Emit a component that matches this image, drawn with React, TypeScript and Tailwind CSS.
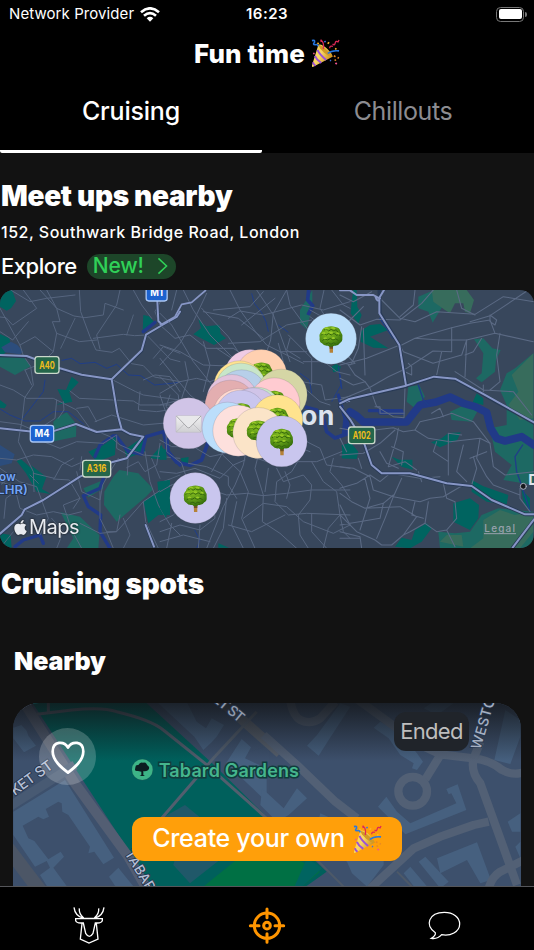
import React, { useState } from 'react'
import { FaApple } from 'react-icons/fa'

interface Pin {
  x: number
  y: number
  color: string
  icon: 'tree' | 'mail'
}

const pins: Pin[] = [
  { x: 513, y: 161, color: '#bbdefb', icon: 'tree' },
  { x: 106, y: 639, color: '#c9c6ee', icon: 'tree' },
  { x: 270, y: 270, color: '#efcbe5', icon: 'tree' },
  { x: 304, y: 270, color: '#ffd0b1', icon: 'tree' },
  { x: 238, y: 304, color: '#ffe391', icon: 'tree' },
  { x: 243, y: 311, color: '#c8e6c9', icon: 'tree' },
  { x: 245, y: 331, color: '#b7cfe9', icon: 'tree' },
  { x: 216, y: 345, color: '#e3c3dc', icon: 'tree' },
  { x: 365, y: 329, color: '#d5d6a5', icon: 'tree' },
  { x: 211, y: 362, color: '#e3aeb0', icon: 'tree' },
  { x: 343, y: 355, color: '#ffcbd1', icon: 'tree' },
  { x: 236, y: 388, color: '#ffd9d0', icon: 'tree' },
  { x: 290, y: 383, color: '#c8e6c9', icon: 'tree' },
  { x: 280, y: 385, color: '#d0c4e8', icon: 'tree' },
  { x: 243, y: 392, color: '#c9c6ee', icon: 'tree' },
  { x: 352, y: 406, color: '#ffe38e', icon: 'tree' },
  { x: 86, y: 415, color: '#d0c4e7', icon: 'mail' },
  { x: 203, y: 428, color: '#bbdefb', icon: 'tree' },
  { x: 235, y: 437, color: '#fde0dd', icon: 'tree' },
  { x: 295, y: 444, color: '#fbe4c8', icon: 'tree' },
  { x: 365, y: 469, color: '#c9c6ee', icon: 'tree' }
]

const Tree = () => (
  <g>
    <path d="M-5 16L-4 42H6L6 14Z" fill="#b58136" />
    <path d="M-5 16L-4 30H6L6 14Z" fill="#6f5122" />
    <path
      d="M-12 -35Q0 -40 13 -35Q26 -33 28 -23Q36 -13 34 -1Q35 9 27 13Q21 23 9 21Q0 28 -9 21Q-21 23 -27 14Q-36 9 -34 -3Q-37 -14 -28 -22Q-26 -33 -12 -35Z"
      fill="url(#leaves)"
    />
    <path
      d="M-21 -26Q-12 -33 -7 -23Q0 -32 8 -24Q18 -30 20 -19M-29 -10Q-22 -20 -14 -11Q-7 -20 1 -11Q10 -20 16 -10Q24 -17 29 -7M-26 6Q-19 -4 -10 4Q-2 -5 6 4Q14 -3 22 5M-16 16Q-6 8 0 17Q8 9 14 15"
      fill="none"
      stroke="#34650b"
      strokeWidth="3"
    />
    <path
      d="M-19 -29Q-12 -34 -8 -29M1 -31Q7 -34 12 -29M-27 -15Q-21 -20 -17 -15M-4 -16Q0 -20 5 -16M16 -16Q21 -18 24 -13M-22 0Q-17 -4 -13 0M3 0Q7 -4 11 0"
      fill="none"
      stroke="#97c926"
      strokeWidth="5"
    />
  </g>
)

const Mail = () => (
  <g>
    <rect x="-38" y="-23" width="76" height="50" rx="2" fill="url(#paper)" stroke="#b9b9bd" strokeWidth="1.5" />
    <path d="M-37 26L-10 -1M37 26L10 -1" stroke="#b4b4b8" strokeWidth="2" />
    <path d="M-37 -22L-4 12Q0 15 4 12L37 -22" fill="#e8e8ea" stroke="#9b9b9f" strokeWidth="2.5" />
  </g>
)

const PartyIcon = ({ className }: { className: string }) => (
  <svg viewBox="0 0 90 90" className={className} aria-label="party popper">
    <defs>
      <linearGradient id="cone" x1="0" y1="0" x2="1" y2="0.6">
        <stop offset="0" stopColor="#ffd34a" />
        <stop offset="0.5" stopColor="#f8d765" />
        <stop offset="1" stopColor="#c98a17" />
      </linearGradient>
    </defs>
    <path d="M23 18Q31 13 51 31Q68 48 67 55L7 86Q3 89 3 82Z" fill="url(#cone)" />
    <path d="M23 18Q42 20 67 55Q57 57 40 42Q24 27 23 18Z" fill="#d19a26" />
    <path d="M20 34Q27 49 47 65M12 52Q17 64 32 74M6 72Q8 79 14 83" fill="none" stroke="#9b51d8" strokeWidth="6" />
    <path d="M38 31Q42 15 33 5Q29 1 32 9M58 29Q58 19 68 23M67 15Q73 22 75 13Q77 4 84 9L87 3" fill="none" stroke="#dd2857" strokeWidth="4" />
    <path d="M3 5Q13 2 11 10Q4 17 13 18Q21 15 22 23M52 45Q65 34 87 37" fill="none" stroke="#2878df" strokeWidth="5" />
    <path d="M20 12l4 3M75 29l4 3M56 10l-4 5" stroke="#ffb329" strokeWidth="5" />
    <path d="M7 44l4 2M76 74l4 4" stroke="#ef5794" strokeWidth="5" />
    <path d="M71 52l5 3M75 63l1 5M83 57l3 3" stroke="#e98922" strokeWidth="5" />
    <path d="M42 6l3 4M59 66l3 2" stroke="#386fe4" strokeWidth="5" />
  </svg>
)

const Shield = ({ x, y, w, label, motorway }: { x: number; y: number; w: number; label: string; motorway?: boolean }) => (
  <g>
    <rect
      x={x - w / 2}
      y={y - 25}
      width={w}
      height="50"
      rx="8"
      fill={motorway ? '#1c62cf' : '#24664a'}
      stroke={motorway ? '#a9c6f4' : '#cbd8cb'}
      strokeWidth="4"
    />
    <text
      x={x}
      y={y + 11}
      textAnchor="middle"
      textLength={w - 25}
      lengthAdjust="spacingAndGlyphs"
      fontSize="32"
      fontWeight="700"
      fill={motorway ? '#ffffff' : '#efbc1b'}
      stroke="none"
    >
      {label}
    </text>
  </g>
)

const LondonMap = () => (
  <svg viewBox="0 0 534 258" className="block w-full h-[258px] rounded-[14px] bg-[#38475c] font-['Inter',sans-serif]">
    <defs>
      <radialGradient id="leaves" cx="0.4" cy="0.3" r="0.75">
        <stop offset="0" stopColor="#86bd20" />
        <stop offset="0.55" stopColor="#5d9816" />
        <stop offset="1" stopColor="#2f6709" />
      </radialGradient>
      <linearGradient id="paper" x1="0" y1="0" x2="0" y2="1">
        <stop offset="0" stopColor="#f2f2f3" />
        <stop offset="1" stopColor="#cfcfd2" />
      </linearGradient>
    </defs>

    {/* West */}
    <g transform="translate(0 -5) scale(0.33333)" fill="none" strokeLinejoin="round" strokeLinecap="round">
      <path fill="#006460" d="M0 20L35 12L48 48L33 70L20 77L0 65ZM0 147L28 160L35 190L0 215ZM0 345L20 360L14 370L0 368ZM215 275L236 292L208 322L217 350L168 360L190 350L172 312L198 315ZM50 528L63 523L100 555L92 540L139 576L126 612L152 627L110 620L78 565ZM348 452L345 510L290 530L265 500L310 480ZM430 650L475 620L472 590L510 585L510 690L475 690L445 715ZM430 90L447 94L466 115L428 140ZM370 480L380 490L430 455L435 500L380 520ZM450 520L485 480L500 525ZM0 745L32 750L35 790L0 790Z" />
      <path fill="#1d6963" d="M0 213L70 215L92 244L45 270L0 245ZM200 382L229 417L228 455L162 469L160 410L175 395ZM340 575L358 555L415 565L460 612L438 635L350 710L312 660L313 620ZM182 682L240 695L298 750L295 790L200 790L220 760ZM250 610L310 585L310 610L265 637Z" />
      <path fill="#2c4d7c" d="M4 187L33 170L52 180L70 200L60 208L15 202ZM0 480L44 508L35 535L0 543Z" />
      <path stroke="#203e89" strokeWidth="3" d="M186 226L215 220L240 236L285 232L320 250L350 238L385 270L422 272L464 300L540 292M135 285L130 320L68 400M0 372L30 390L74 408L120 408L160 380L205 380L252 418" />
      <path stroke="#213a88" strokeWidth="10" d="M310 580L300 610L250 632L265 665L302 690L300 740L330 790M340 452L300 480L285 515M348 452L385 500L425 507L438 455L490 440L505 505L540 540M430 140L465 112M45 785L70 765L120 750L130 775" />
      <g stroke="#586781" strokeWidth="2.8">
        <path d="M0 70L60 180L70 212L92 244L100 300L74 338L67 400L55 470L100 560L102 620M120 15L170 70L180 110L157 110L170 145L160 200L125 235L75 255M238 15L242 80L270 155L288 195L336 202L358 190L395 236L430 242L463 276L540 290" />
        <path d="M140 15L170 70L222 93L255 98L310 90L315 55L370 75M360 15L350 60L320 105L290 150L300 192M170 145L238 170L290 165M280 160L370 148L404 152L440 150L510 222L540 230M70 15L110 70L38 120L18 98L0 96M0 140L38 165L85 110M60 180L105 155L160 200" />
        <path d="M0 300L40 315L80 340L160 340L230 375L270 430L330 455L360 480L430 510L540 520M210 318L238 340L400 348L420 360L540 360M335 283L407 320L430 330L540 345M420 320L415 375L470 380L540 370M0 410L60 418L100 435L130 470L180 490L230 470L310 475" />
        <path d="M285 410L335 390L430 420L540 410M230 370L265 365L290 410M0 520L50 525L100 510L155 515L215 545L260 525M0 550L58 590L110 605L145 700L120 750M0 590L60 610L18 640L12 700M100 565L163 580L185 540L220 520M160 582L208 585L240 640L220 670" />
        <path d="M230 560L245 620L300 645L308 600L330 560L355 520M300 620L300 700L320 740L340 790M240 640L190 660L215 735L245 790M45 610L60 670L110 690L160 680L205 690L245 680M360 690L350 740L300 745L240 715M320 740L350 740L430 650L490 610L540 590M430 650L437 710L475 790M480 475L470 540L435 560L415 530L380 548M435 500L450 590L475 660L510 720L540 750" />
        <path d="M310 475L350 450L350 490L385 510L382 570M500 15L465 80L480 120M400 15L425 60L455 100M430 285L465 270L510 275L540 320M460 220L490 185L540 205M510 330L498 365L516 380M245 515L240 555M32 15L90 50L140 40L225 30M0 600L15 590M75 255L95 300M170 345L165 400L120 430M190 350L192 375L175 400" />
        <path d="M155 700L190 740L170 790M0 790L40 740M370 700L390 750L370 790M490 590L540 570M400 90L380 150M90 570L115 595M455 520L480 580M225 100L182 190" strokeWidth="2.5" />
      </g>
      <path
        stroke="#283a56"
        strokeWidth="9"
        d="M0 212L80 215L180 252L245 270L335 283L425 198L438 150L487 120M335 283L352 385L365 435L390 448L430 456L380 520L335 532L240 575L130 645L74 673L65 690L0 748M0 430L100 440L165 437L228 417L290 442L365 435M472 50L475 108L487 120L530 96L540 80M437 720L462 785"
      />
      <path
        stroke="#8796c5"
        strokeWidth="6"
        d="M0 210L80 213L180 250L245 269L335 283L425 196L438 149L487 120M335 283L352 385L365 433L390 447L430 455L380 520L335 532L240 575L130 645L74 673L65 690L0 746M0 430L100 440L165 437L228 417L290 441L365 433M472 50L475 108L487 120L530 96L540 80M437 720L462 785"
      />
    </g>

    {/* Centre */}
    <g transform="translate(160 -5) scale(0.33333)" fill="none" strokeLinejoin="round">
      <path fill="#006460" d="M100 148L123 130L115 103L138 124L178 120L182 146L198 160L162 180ZM0 590L26 585L28 645L18 700L0 670ZM0 485L18 495L20 520L0 525ZM62 520L86 516L84 535L66 535ZM514 245L528 237L543 245L537 259L520 262ZM545 480L570 475V520L548 520ZM175 775L207 788H175Z" />
      <path fill="#1d6963" d="M420 75L457 15V65L440 133L420 115Z" />
      <path stroke="#213a88" strokeWidth="11" d="M20 460L25 500L50 532L90 541L125 525L145 470M446 15L443 45L458 62L444 90M435 366L470 375L490 400L500 440L525 459L560 447L565 395L550 380" />
      <path stroke="#203e89" strokeWidth="3" d="M275 25L283 55L305 83L318 110L325 140M355 120L385 142M455 325L448 285L420 265M535 245L543 300L515 350M104 735L120 765L110 790" />
      <g stroke="#586781" strokeWidth="3" strokeLinecap="round">
        <path d="M70 15L100 75L150 150L235 235M210 15L240 75L290 145L320 180L390 215L430 235M0 85L35 120L100 230L180 330M0 180L60 200L130 240L250 245M125 70L205 155L300 300M290 15L340 90L390 230M380 15L340 85L332 165L310 230M380 15L390 60L430 115L510 220L570 240M140 25L100 110L60 175L0 240" />
        <path d="M0 325L60 290L110 280L150 290L230 260M0 220L40 270L90 330L150 380M0 275L55 330L60 405M0 360L60 345L160 350M75 230L85 280L65 340M160 75L270 65L310 20M205 100L240 78L310 90L425 60L490 75L570 50M245 120L345 40M205 175L300 170L380 120L455 105" />
        <path d="M450 75L495 100L570 125M492 15L480 70L520 130L510 220M430 230L510 230L570 200M385 150L455 220L455 300M360 200L440 200M390 160L380 195L420 220M0 120L45 160L90 150L140 190L220 190L265 220M130 170L150 240L130 320M170 190L215 220L340 215M515 15L550 60L570 70M515 140L570 160M450 95L490 125L535 110" />
        <path d="M0 465L35 485L100 485L150 515L220 500L290 520L350 540L410 530L470 530L570 490M18 440L20 500L65 535L85 595L140 610L200 630L260 625L310 632L380 625L455 615L570 615M0 560L50 565L105 550L180 580L220 540L255 525M180 445L188 510L240 560L265 620L245 700L285 790M265 465L250 540L225 600L190 665L140 790M300 490L285 550L310 630L307 710L360 745L410 790" />
        <path d="M85 535L140 545L205 575L205 600L230 640M425 510L395 560L350 590L345 650L385 690L440 685L570 690M350 550L370 590L430 570L455 600L450 645L415 690L420 750L445 790M250 700L310 655L380 665L430 710L520 745L570 720M205 720L275 740L375 690M160 640L165 700L120 735L60 720L0 740M35 715L20 790M120 720L115 790M200 640L190 730L160 790" />
        <path d="M455 530L490 590L530 620L540 690L505 730L490 790M520 520L510 560L545 600L570 640M440 470L480 490L500 540L570 550M455 685L455 740L500 790M325 550L315 620M230 650L215 720L250 790M0 710L40 690L70 660M0 620L35 600M190 500L155 560M375 560L390 600L380 640M540 690L550 740L570 760" />
        <path d="M440 315L480 350L510 360M425 290L485 300L495 345L570 335M410 485L450 500M465 160L490 170L480 220L530 260L570 270M0 330L20 390M50 15L35 75M355 175L370 230M130 80L235 100L310 160M0 770L70 750L150 770" />
      </g>
      <path stroke="#8796c5" strokeWidth="5" d="M138 15L95 52L65 58L45 95L0 121M570 347L546 354L548 378L566 393" />
    </g>

    {/* East */}
    <g transform="translate(340 -5) scale(0.33333)" fill="none" strokeLinejoin="round" strokeLinecap="round">
      <path fill="#006460" d="M40 15H50L52 65L65 90L55 116L32 85L35 50ZM62 138L90 120L120 117L145 135L90 155L145 190L100 188L62 170ZM273 472L305 460L325 444L362 442L352 465L300 487ZM155 515L178 524H217L218 554L185 545ZM8 485L30 470L55 500L50 522L5 520ZM410 325L430 340V360L398 352ZM395 585L430 604L505 630L500 658L440 650L395 620ZM340 655L390 640L417 660L415 700L390 735L340 710ZM165 785L185 758L215 765L225 735L260 715L275 730L245 770L210 790ZM545 615L570 640V680L550 650Z" />
      <path fill="#1d6963" d="M235 35L270 20L300 15L310 60L278 113L265 80L235 70ZM402 163L430 160L457 190L482 195L468 225L465 260L425 292L408 280L425 265L430 205ZM480 315L500 265L525 250L580 205V600L490 585L515 540L465 500L450 430L500 420L500 360ZM330 380L395 350L420 365L395 410L335 405ZM205 305L238 300L255 335L225 370L200 350ZM425 690L475 670L580 680V790H300L295 740L345 745L390 740Z" />
      <path fill="#376c5c" d="M275 15H380L402 45L390 85L375 80L370 55L345 55L330 85L315 75L280 50ZM515 270L545 240L580 205V400L540 405L505 360L535 320ZM430 705L480 675L525 690L580 680V740L540 790H390L430 760ZM320 750L365 750L370 785L300 770Z" />
      <path stroke="#213a88" strokeWidth="23" d="M30 380L50 392L70 411H200L220 385L240 360L285 352L330 336L370 355L405 365L440 382L452 430L470 460L495 468L545 455L582 480" />
      <path stroke="#213a88" strokeWidth="10" d="M-5 330L15 400L10 450L-5 457M88 377H185M120 384H190" />
      <path stroke="#203e89" strokeWidth="4" d="M548 480L525 515L530 560L548 610L570 680M235 300L250 345L265 360M0 270L5 310M120 100L160 160" />
      <g stroke="#5b6a84" strokeWidth="3.2">
        <path d="M0 75L60 120L110 103L180 105L245 55L280 15M125 45L180 100L225 110L290 80L405 88L490 35L582 50M390 110L450 92L565 15M185 180L225 160L335 128L390 115L450 105L465 145L380 165L300 165L225 160M465 145L580 170M450 90L470 105L465 120L450 110Z" />
        <path d="M182 185L190 200L279 235L365 210L380 165L375 275M305 200L290 270M335 128V200L279 198L200 250L145 275L85 310L0 345M0 240L80 220L180 180M25 240L45 270L75 290L90 310L110 365L160 395L192 398L195 305M195 260L215 270V245L205 235M0 30L40 50L95 20M0 135L30 105L70 65M65 125L55 190L35 235" />
        <path d="M225 15L220 60L180 95M350 15L365 70L405 90M480 145L470 210L480 290L450 315M345 260L430 315L520 320L575 390M430 300V320M425 160L400 200L375 210M70 130L75 270M0 190L45 235L25 240M0 430L60 440L160 428L190 440L225 435L240 410L300 397L335 385L400 410L450 475L460 545L495 570L582 560" />
        <path d="M225 435L265 460L330 470L420 460L450 475M175 430L170 460L145 545L195 530L230 555M155 485L190 500L185 540M290 470L280 500L325 530L325 445L365 450M325 530V570M275 385L300 370L310 395M105 365H120V385H192M120 500L140 535L175 550M0 510L70 505L120 475L165 435M0 545L40 550L90 575L100 615L160 635L240 650L270 640L310 635L370 600" />
        <path d="M0 610L50 595L90 570L120 590L150 565L240 580L300 575M75 580L90 640L60 735M0 625L35 650L75 670L130 655L160 630M0 690L50 740L105 765L125 780H155L190 750L210 740L255 715L290 740L320 735L345 785M185 580L160 635L135 700L110 760M265 650L255 715M225 650L215 690L250 700M75 670L180 665L230 695L190 750M310 595L320 640L345 650L350 700L320 735" />
        <path d="M400 515L410 550L395 600M390 520L440 500M420 460L410 520L440 575L460 600L540 630M540 610V640L570 680M0 740L60 755L65 790M0 760H60M20 500L0 460M55 520L65 550M235 560L245 590M0 660L30 720M130 655L120 700L0 720M370 480L350 560L380 590M0 280L40 300L75 290M0 170L50 180" />
      </g>
      <path stroke="#283a56" strokeWidth="11" d="M118 15L120 85L178 180L199 302L282 276L345 282L432 330L582 414M199 304L28 342L0 357M0 365L30 405L70 470L95 540L125 565H210L320 595L395 603L455 645L555 688H582M582 705L518 788" />
      <path stroke="#8796c5" strokeWidth="6" d="M0 16H30L50 30H100L118 40M132 15L118 38L118 85L178 180L198 302L282 275L345 281L432 328L582 412M198 302L28 342L0 355M0 365L30 403L70 468L95 540L125 565H210L320 595L395 603L455 645L555 688H582M582 703L518 788M106 34Q112 55 120 40" />
      <circle cx="550" cy="604" r="9" fill="#17191d" stroke="#a9b1bf" strokeWidth="3" />
      <text x="565" y="599" fontSize="45" fontWeight="700" fill="#dfe4ec">D</text>
      <Shield x={65} y={451} w={79} label="A102" />
      <text x="433" y="740" fontSize="30" fontWeight="500" textLength="92" fill="#99a2ae" stroke="none">Legal</text>
      <path d="M433 746H527" stroke="#99a2ae" strokeWidth="3" />
    </g>

    <g transform="translate(0 -5) scale(0.33333)">
      <Shield x={470} y={23} w={63} label="M1" motorway />
      <Shield x={141} y={240} w={72} label="A40" />
      <Shield x={126} y={446} w={70} label="M4" motorway />
      <Shield x={290} y={551} w={84} label="A316" />
      <g fontSize="36" fontWeight="600" fill="#73a4f6" stroke="#20304b" strokeWidth="5" paintOrder="stroke">
        <text x="-3" y="587" textLength="50" lengthAdjust="spacingAndGlyphs">ow</text>
        <text x="-8" y="627" textLength="92" lengthAdjust="spacingAndGlyphs">LHR)</text>
      </g>
    </g>

    <g transform="translate(160 -5) scale(0.33333)">
      <text x="423" y="419" fontSize="80" fontWeight="700" textLength="100" fill="#dce4ef" stroke="#38475c" strokeWidth="4" paintOrder="stroke">on</text>
      {pins.map((pin, index) => (
        <g key={index} transform={`translate(${pin.x} ${pin.y})`}>
          <circle r="76.5" fill={pin.color} stroke="#595763" strokeOpacity="0.35" strokeWidth="1.5" />
          {pin.icon === 'tree' ? <Tree /> : <Mail />}
        </g>
      ))}
    </g>
  </svg>
)

const GardenMap = () => (
  <svg viewBox="0 0 508 184" className="block w-full h-[184px] font-['Inter',sans-serif]">
    <defs>
      <linearGradient id="shade" x1="0" y1="0" x2="0" y2="1">
        <stop offset="0" stopColor="#111316" stopOpacity="0.8" />
        <stop offset="1" stopColor="#111316" stopOpacity="0" />
      </linearGradient>
    </defs>
    <rect width="508" height="184" fill="#3d506c" />
    <g transform="translate(-13 -8) scale(0.33333)" fill="none">
      <path fill="#00605c" d="M95 20H435L640 208L980 530L910 580H460Z" />
      <path fill="#007044" d="M610 575L705 498L800 440L960 530L900 580Z" />
      <path fill="#3d506c" d="M640 208L810 150V375Z" />
      <path fill="#205869" d="M485 370L555 330L640 400L690 470L570 565L520 510L535 455Z" />
      <g fill="#46607f">
        <path d="M40 98L64 90L80 107L85 122L108 152L72 172L40 130Z" />
        <path d="M40 350L195 255L342 488L310 508L283 470L265 475L270 455L205 360L187 350L185 325L175 320L137 342L147 365L130 373L115 365L68 392L85 430L103 438L145 493L182 470L192 485L160 518L205 580H145L120 540L150 518L140 498L105 515L40 420Z" />
        <path d="M355 518L405 580H350L327 545Z" />
        <path d="M470 20L583 125L610 165L635 142L650 125L672 90L635 70L618 100L590 80L560 20Z" />
        <path d="M725 132L753 157L735 190L800 220V320L678 205Z" />
      </g>
      <g stroke="#4c5666">
        <path d="M20 455L130 600" strokeWidth="42" />
        <path d="M70 20L105 75L225 265L385 485L445 590" stroke="#535e73" strokeWidth="30" />
        <path d="M20 340L225 210" stroke="#485a73" strokeWidth="28" />
        <path d="M660 15L840 175" stroke="#555e6b" strokeWidth="30" />
      </g>
      <path stroke="#525e6e" strokeWidth="9" d="M110 58L215 45Q310 35 350 50Q455 75 490 105L615 205L800 370M485 370L640 190L770 50M145 20V50" />
    </g>
    <g transform="translate(254 -8) scale(0.33333)" fill="none">
      <g fill="#46607f">
        <path d="M220 25L250 35L185 135L155 182L120 152L150 120ZM340 80L320 98L365 130L400 180L440 205L435 220L450 225L468 200L450 175L390 105ZM500 20L470 40L510 60L560 25ZM715 45L760 75V125L730 207L682 195Z" />
        <path d="M358 305L333 335L415 418L598 345L572 268L538 282L545 298L553 295L568 325L430 385L390 350ZM-15 280L50 340L60 325L90 280L120 310L65 360L30 380L-20 330ZM160 355L215 380L140 430ZM760 355L722 380L735 410H760Z" />
        <path d="M510 490L630 442L672 555L640 565L600 495L520 535ZM475 485L545 560L520 580L455 500ZM410 535L430 515L485 580H445ZM760 440V490L745 455ZM225 490H350L350 510L300 575L255 535L240 500Z" />
      </g>
      <g stroke="#526075" strokeWidth="25" strokeLinejoin="round">
        <path d="M-10 120L90 210L205 320L270 370M70 20Q80 65 100 75Q130 90 160 70L205 20M260 5L370 85L460 150L520 178L620 190Q670 195 705 225Q735 242 770 232M520 180L475 253M620 190Q610 230 640 265L750 570M665 380L620 390L520 425L440 460L310 580M770 495L700 530Q675 545 665 580" />
        <circle cx="437" cy="289" r="43" />
        <path d="M620 190L640 140" />
      </g>
      <path fill="#006460" d="M120 490L165 520L100 580H80Z" />
      <path stroke="#4d5968" strokeWidth="6" d="M145 490L235 580M390 530L440 580" />
    </g>
    <rect width="508" height="58" fill="url(#shade)" />
    <g transform="translate(-13 -8) scale(0.33333)" stroke="#26354c" strokeWidth="5" paintOrder="stroke">
      <text transform="translate(44 303) rotate(-36)" fontSize="43" fontWeight="500" textLength="146" fill="#b4bfd5">KET ST</text>
      <text transform="translate(373 475) rotate(59)" fontSize="41" fontWeight="500" textLength="166" fill="#b4bfd5">TABARD</text>
      <text transform="translate(616 -1) rotate(40)" fontSize="43" fontWeight="500" textLength="134" fill="#929baa">KET ST</text>
      <circle cx="427" cy="224" r="31" fill="#3db487" stroke="#1d5c58" strokeWidth="3" />
      <path d="M424 230L414 228Q402 230 406 219Q405 209 415 210Q420 200 429 203Q439 201 442 211Q452 217 444 226Q436 230 430 228V240L435 243H419L424 240Z" fill="#0c1c20" stroke="none" />
      <text x="476" y="247" fontSize="54" fontWeight="600" textLength="421" fill="#45b58d" stroke="#103c3c" strokeWidth="9">Tabard Gardens</text>
      <text transform="translate(1441 166) rotate(-74)" fontSize="42" fontWeight="500" letterSpacing="2" fill="#a4afc1">WESTON</text>
    </g>
  </svg>
)

const StatusBar = () => (
  <div className="relative flex h-7 items-center justify-between pl-[9px] pr-[7px]">
    <div className="flex items-center gap-[6px]">
      <span className="text-[15px] tracking-[0.08px]">Network Provider</span>
      <svg viewBox="0 0 60 44" className="h-[15px] w-5" fill="none" stroke="white" strokeWidth="8">
        <path d="M3 15Q30 -8 57 15M12 26Q30 10 48 26" />
        <path d="M20 33Q30 25 40 33L30 44Z" fill="white" stroke="none" />
      </svg>
    </div>
    <span className="absolute left-1/2 -translate-x-1/2 text-[15px] font-semibold tracking-[0.5px]">16:23</span>
    <div className="flex items-center gap-px">
      <div className="h-[15px] w-7 rounded-[4.5px] border border-[#777] p-[1.5px]">
        <div className="h-full w-full rounded-[2px] bg-white" />
      </div>
      <div className="h-[5px] w-[2px] rounded-r bg-[#777]" />
    </div>
  </div>
)

const tabs = ['Cruising', 'Chillouts']

const App = () => {
  const [activeTab, setActiveTab] = useState('Cruising')
  const [liked, setLiked] = useState(false)

  return (
    <div className="relative flex h-[950px] w-[534px] flex-col overflow-hidden bg-[#121212] font-['Inter',sans-serif] text-white">
      <header className="h-[153px] shrink-0 bg-black">
        <StatusBar />
        <h1 className="flex h-[50px] items-center justify-center gap-[6px] text-[26px] font-extrabold tracking-[0.1px]">
          Fun time <PartyIcon className="h-[29px] w-[29px]" />
        </h1>
        <nav className="flex h-[75px]">
          {tabs.map((tab) => (
            <button
              key={tab}
              onClick={() => setActiveTab(tab)}
              className={
                activeTab === tab
                  ? 'w-[262px] rounded-[2px] border-b-[3px] border-white pb-1 text-[25px] font-medium tracking-[-0.2px]'
                  : 'flex-1 pb-[7px] pl-[10px] text-[25px] tracking-[-0.4px] text-[#8c8c91]'
              }
            >
              {tab}
            </button>
          ))}
        </nav>
      </header>

      <main className="min-h-0 flex-1 overflow-hidden">
        <h2 className="mt-6 pl-px text-[28px] font-black leading-[38px] tracking-[-0.3px]">Meet ups nearby</h2>
        <p className="mt-[7px] pl-px text-base font-medium leading-5 tracking-[0.5px]">152, Southwark Bridge Road, London</p>
        <div className="mt-[11px] flex h-[26px] items-center gap-[10px] pl-px">
          <span className="text-[22px] font-medium tracking-[-0.45px]">Explore</span>
          <button className="flex h-[25px] w-[89px] items-center justify-between rounded-full bg-[#1d4629] pl-[6px] pr-[8px] text-[21px] font-medium tracking-[-0.2px] text-[#30d158]">
            New!
            <svg viewBox="0 0 12 20" className="h-[18px] w-[11px]" fill="none" stroke="currentColor" strokeWidth="1.7">
              <path d="M1.5 1.5L10.5 10L1.5 18.5" />
            </svg>
          </button>
        </div>
        <div className="relative mt-[11px]">
          <LondonMap />
          <div className="absolute bottom-[6px] left-[13px] flex items-center gap-px text-[20px] tracking-[-0.5px] text-[#e7eaf0] drop-shadow-[0_0_1px_#111]">
            <FaApple className="h-[17px] w-[15px]" />
            Maps
          </div>
        </div>

        <h2 className="mt-[17px] pl-px text-[28px] font-black leading-[38px] tracking-[-0.2px]">Cruising spots</h2>
        <h3 className="mt-[41px] pl-[14px] text-[25px] font-black leading-[34px] tracking-[-0.1px]">Nearby</h3>

        <section className="relative mx-[13px] mt-[25px] h-[184px] overflow-hidden rounded-t-[26px]">
          <GardenMap />
          <button
            onClick={() => setLiked(!liked)}
            aria-label="Like"
            className="absolute left-[26px] top-[25px] flex h-[57px] w-[57px] items-center justify-center rounded-full bg-white/20"
          >
            <svg viewBox="0 0 100 100" className="h-[34px] w-[34px]" fill={liked ? 'white' : 'none'} stroke="white" strokeWidth="8">
              <path d="M50 22C39 3 5 1 5 34C5 61 32 82 50 96C68 82 95 61 95 34C95 1 61 3 50 22Z" strokeLinejoin="round" />
            </svg>
          </button>
          <span className="absolute right-[52px] top-[9px] flex h-[39px] w-[75px] items-center justify-center rounded-[12px] bg-[#20242a] pb-px text-[22px] tracking-[-0.7px] text-[#bebebe]">
            Ended
          </span>
        </section>
      </main>

      <button className="absolute left-[132px] top-[817px] flex h-[44px] w-[270px] items-center justify-center gap-2 rounded-[12px] bg-[#ff9f0a] text-[25px] font-medium tracking-[-0.3px]">
        Create your own <PartyIcon className="h-[29px] w-[29px]" />
      </button>

      <footer className="flex h-16 shrink-0 border-t border-[#55565a] bg-black pt-[19px]">
        <button aria-label="Home" className="flex flex-1 items-start justify-center">
          <svg viewBox="30 35 114 114" className="h-[38px] w-[38px]" fill="none" stroke="white" strokeWidth="4">
            <path d="M42 39Q45 64 70 72H104Q129 64 132 39M58 42Q56 58 71 71M116 42Q118 58 103 71" />
            <path d="M47 73H127V79Q125 86 112 86H106L99 117Q88 135 77 117L70 86H62Q49 86 47 79ZM66 88L61 134L87 146L114 134L109 88" />
          </svg>
        </button>
        <button aria-label="Nearby" className="flex flex-1 items-start justify-center">
          <svg viewBox="33 36 114 114" className="h-[38px] w-[38px]" fill="none" stroke="#ff9500" strokeWidth="9">
            <circle cx="90" cy="95" r="38" />
            <circle cx="90" cy="95" r="10" />
            <path d="M90 45V71M90 119V145M40 95H66M114 95H140" strokeLinecap="round" />
          </svg>
        </button>
        <button aria-label="Messages" className="flex flex-1 items-start justify-center">
          <svg viewBox="477 635 114 114" className="h-[38px] w-[38px]" fill="none" stroke="white" strokeWidth="3.8">
            <path d="M505 715C472 694 485 654 532 654C559 654 578 669 578 689C578 713 550 726 524 721Q512 735 493 732Q507 724 505 715Z" />
          </svg>
        </button>
      </footer>
    </div>
  )
}

export default App
